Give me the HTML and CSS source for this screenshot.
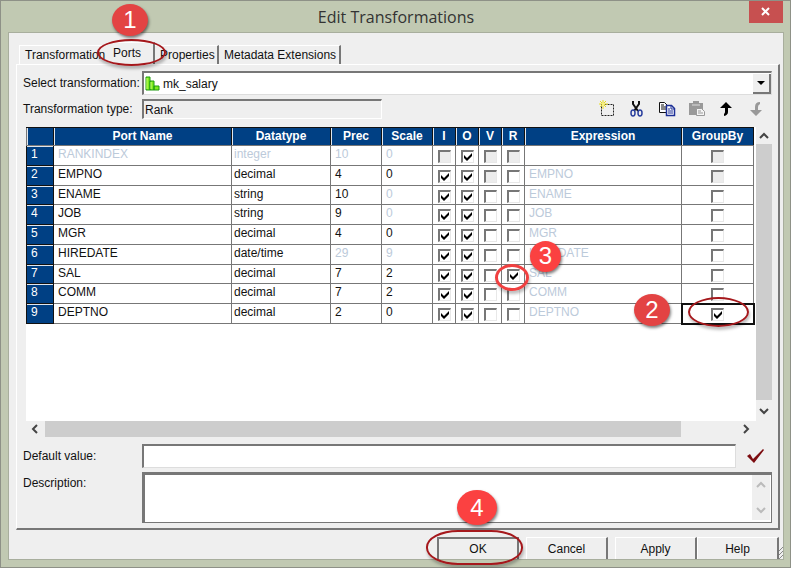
FILE: index.html
```html
<!DOCTYPE html>
<html lang="en">
<head>
    <meta charset="UTF-8">
    <meta name="viewport" content="width=device-width, initial-scale=1.0">
    <title>Edit Transformations</title>
    <link rel="stylesheet" href="styles.css">
</head>
<body>
<div class="window">
    <header class="titlebar">
        <h1>Edit Transformations</h1>
        <button class="close-btn" aria-label="Close">
            <svg width="10" height="10" viewBox="0 0 10 10"><path d="M1 1l7 7M8 1l-7 7" stroke="#fff" stroke-width="2"/></svg>
        </button>
    </header>

    <main class="client">
        <!-- Tabs -->
        <div class="tabs" role="tablist">
            <button class="tab tab-first" role="tab">Transformation</button>
            <button class="tab tab-active" role="tab" aria-selected="true">Ports
                <span class="ring ring-tab"></span>
                <span class="badge badge-1">1</span>
            </button>
            <button class="tab tab-props" role="tab">Properties</button>
            <button class="tab tab-meta" role="tab">Metadata Extensions</button>
        </div>

        <section class="panel">
            <div class="row">
                <label class="label" for="transformation">Select transformation:</label>
                <div class="combo">
                    <svg width="15" height="15" viewBox="0 0 15 15"><path d="M1 1h4v13h-4zM5 5h4v9h-4zM9 10h5v4h-5z" fill="#7dea1e" stroke="#1f9a10"/><path d="M2 2v11M6 6v7" stroke="#c8ff70"/></svg>
                    <select id="transformation"><option>mk_salary</option></select>
                    <span class="combo-arrow"><svg width="8" height="4" viewBox="0 0 8 4"><path d="M0 0h8l-4 4z"/></svg></span>
                </div>
            </div>

            <div class="row type-row">
                <label class="label" for="type">Transformation type:</label>
                <input class="type-input" id="type" type="text" value="Rank" readonly>
                <div class="toolbar">
                    <button class="tool" aria-label="New port">
                        <svg width="18" height="18" viewBox="0 0 18 18" fill="none"><path d="M3.500 4.500h12v11h-12z" stroke="#222" stroke-dasharray="2 1"/><path d="M5 0v9M1 4h9M2 1l6 6M8 1L2 7" stroke="#e8dc1c"/><path d="M5 3v3M4 4h3" stroke="#fff89a"/></svg>
                    </button>
                    <button class="tool" aria-label="Cut">
                        <svg width="18" height="18" viewBox="0 0 18 18" fill="none"><path d="M5 1v3l5 7M11 1v3l-5 7" stroke="#111" stroke-width="2"/><ellipse cx="5" cy="13" rx="2" ry="3" stroke="#2a3f9e" stroke-width="1.5"/><ellipse cx="12" cy="13" rx="2" ry="3" stroke="#2a3f9e" stroke-width="1.5"/></svg>
                    </button>
                    <button class="tool" aria-label="Copy">
                        <svg width="18" height="18" viewBox="0 0 18 18"><path d="M1.500 2.500h5l3 3v7h-8z" fill="#fff" stroke="#111"/><path d="M3 5h3M3 7h5M3 9h5" stroke="#111"/><path d="M8.500 5.500h5l3 3v7h-8z" fill="#fff" stroke="#1c2f96" stroke-width="1.500"/><path d="M13 5v4h4M10 9h2M10 11h5M10 13h5" stroke="#1c2f96" fill="none"/></svg>
                    </button>
                    <button class="tool" aria-label="Paste">
                        <svg width="18" height="18" viewBox="0 0 18 18"><path d="M1 3h4V1h6v2h4v12H1z" fill="#999"/><path d="M4 5h8" stroke="#ddd"/><path d="M8.500 8.500h5l3 3v4h-8z" fill="#f4f4f4" stroke="#999"/><path d="M10 11h3M10 13h5" stroke="#999"/></svg>
                    </button>
                    <button class="tool" aria-label="Move up">
                        <svg width="18" height="18" viewBox="0 0 18 18"><path d="M8 2l6 6h-4v4q0 3-4 4v-2q1-1 1-2V8H2z"/></svg>
                    </button>
                    <button class="tool" aria-label="Move down" disabled>
                        <svg width="18" height="18" viewBox="0 0 18 18"><path d="M8 16l6-6h-4V7q0-2 2-3V2q-5 0-5 5v3H2z" fill="#999"/></svg>
                    </button>
                </div>
            </div>

            <!-- Ports grid -->
            <div class="grid">
                <div class="pane">
                    <table class="ports">
                        <thead>
                        <tr>
                            <th class="col-num"></th>
                            <th class="col-name">Port Name</th>
                            <th class="col-type">Datatype</th>
                            <th class="col-size">Prec</th>
                            <th class="col-size">Scale</th>
                            <th class="col-flag">I</th>
                            <th class="col-flag">O</th>
                            <th class="col-flag">V</th>
                            <th class="col-flag">R</th>
                            <th>Expression</th>
                            <th class="col-group">GroupBy</th>
                        </tr>
                        </thead>
                        <tbody id="portRows"></tbody>
                    </table>
                </div>
                <div class="vscroll">
                    <svg width="10" height="8" viewBox="0 0 10 8"><path d="M1 6l4-4 4 4" fill="none" stroke="#444" stroke-width="2"/></svg>
                    <span class="thumb"></span>
                    <svg width="10" height="8" viewBox="0 0 10 8"><path d="M1 2l4 4 4-4" fill="none" stroke="#444" stroke-width="2"/></svg>
                </div>
                <div class="hscroll">
                    <svg width="8" height="10" viewBox="0 0 8 10"><path d="M6 1L2 5l4 4" fill="none" stroke="#444" stroke-width="2"/></svg>
                    <span class="track"><span class="thumb"></span></span>
                    <svg width="8" height="10" viewBox="0 0 8 10"><path d="M2 1l4 4-4 4" fill="none" stroke="#444" stroke-width="2"/></svg>
                </div>
            </div>

            <div class="row default-row">
                <label class="label" for="defaultValue">Default value:</label>
                <input class="default-input" id="defaultValue" type="text">
                <button class="validate" aria-label="Validate">
                    <svg width="18" height="14" viewBox="0 0 18 14"><path d="M0 7l3-2 3 5L16 0l1 1L7 14z" fill="#7c0c10"/></svg>
                </button>
            </div>

            <div class="row desc-row">
                <label class="label" for="description">Description:</label>
                <div class="desc">
                    <textarea id="description"></textarea>
                    <div class="desc-scroll">
                        <svg width="10" height="8" viewBox="0 0 10 8"><path d="M1 6l4-4 4 4" fill="none" stroke="#bbb" stroke-width="2"/></svg>
                        <svg width="10" height="8" viewBox="0 0 10 8"><path d="M1 2l4 4 4-4" fill="none" stroke="#bbb" stroke-width="2"/></svg>
                    </div>
                </div>
            </div>
        </section>

        <footer class="buttons">
            <button class="btn btn-ok">OK
                <span class="ring ring-ok"></span>
                <span class="badge badge-4">4</span>
            </button>
            <button class="btn">Cancel</button>
            <button class="btn">Apply</button>
            <button class="btn btn-help">Help</button>
            <svg class="grip" width="4" height="13" viewBox="0 0 4 13"><path d="M0 5l4-4M0 9l4-4M0 13l4-4" stroke="#888"/></svg>
        </footer>
    </main>
</div>

<script>
    // flags: I, O, V, R, GroupBy -> 1 checked, 0 empty, x disabled
    const ports = [
        { name: 'RANKINDEX', type: 'integer', prec: 10, scale: 0, flags: 'x1xxx', expr: '', dim: ['name', 'type', 'prec', 'scale'] },
        { name: 'EMPNO', type: 'decimal', prec: 4, scale: 0, flags: '11x0x', expr: 'EMPNO', dim: [] },
        { name: 'ENAME', type: 'string', prec: 10, scale: 0, flags: '11000', expr: 'ENAME', dim: ['scale'] },
        { name: 'JOB', type: 'string', prec: 9, scale: 0, flags: '11000', expr: 'JOB', dim: ['scale'] },
        { name: 'MGR', type: 'decimal', prec: 4, scale: 0, flags: '11000', expr: 'MGR', dim: [] },
        { name: 'HIREDATE', type: 'date/time', prec: 29, scale: 9, flags: '11000', expr: 'HIREDATE', dim: ['prec', 'scale'] },
        { name: 'SAL', type: 'decimal', prec: 7, scale: 2, flags: '11010', expr: 'SAL', dim: [] },
        { name: 'COMM', type: 'decimal', prec: 7, scale: 2, flags: '11000', expr: 'COMM', dim: [] },
        { name: 'DEPTNO', type: 'decimal', prec: 2, scale: 0, flags: '11001', expr: 'DEPTNO', dim: [] }
    ];
    const flagNames = ['Input', 'Output', 'Variable', 'Rank', 'Group by'];

    function flagCell(port, i) {
        const flag = port.flags[i];
        const state = flag === '1' ? 'checked' : flag === 'x' ? 'disabled' : '';
        let marks = '';
        let cls = 'flag';
        if (port.name === 'SAL' && i === 3) {
            marks = '<span class="ring ring-rank"></span><span class="badge badge-3">3</span>';
        }
        if (port.name === 'DEPTNO' && i === 4) {
            cls += ' focused';
            marks = '<span class="ring ring-group"></span><span class="badge badge-2">2</span>';
        }
        return `<td class="${cls}"><input type="checkbox" aria-label="${flagNames[i]} ${port.name}" ${state}>${marks}</td>`;
    }

    document.getElementById('portRows').innerHTML = ports.map((port, n) => {
        const cell = key => `<td class="${key}${port.dim.includes(key) ? ' dim' : ''}">${port[key]}</td>`;
        return `<tr><th scope="row">${n + 1}</th>`
            + ['name', 'type', 'prec', 'scale'].map(cell).join('')
            + [0, 1, 2, 3].map(i => flagCell(port, i)).join('')
            + `<td class="expr dim">${port.expr}</td>`
            + flagCell(port, 4) + '</tr>';
    }).join('');
</script>
</body>
</html>
```
FILE: styles.css
```css
* {
    box-sizing: border-box;
}
body {
    margin: 0;
    font-family: "Liberation Sans", Arial, sans-serif;
    font-size: 12px;
    color: #111;
}
button, input, select, textarea {
    font: inherit;
    color: inherit;
    margin: 0;
    padding: 0;
    border: none;
    border-radius: 0;
    background: none;
    outline: none;
}
svg {
    display: block;
    flex: none;
}

/* Window frame */
.window {
    display: flex;
    flex-direction: column;
    min-height: 100vh;
    padding: 0 7px 8px 8px;
    background-color: #c1c9b2;
    border: 1px solid #8e9187;
}
.titlebar {
    display: grid;
    grid-template-columns: 1fr auto 1fr;
    height: 32px;
}
.titlebar h1 {
    grid-column: 2;
    margin: 0;
    font-family: "Open Sans", sans-serif;
    font-size: 16px;
    font-weight: normal;
    line-height: 32px;
    color: #333;
}
.close-btn {
    display: flex;
    align-items: center;
    justify-content: center;
    justify-self: end;
    width: 34px;
    height: 22px;
    background-color: #c75050;
}
.client {
    display: flex;
    flex-direction: column;
    flex: 1;
    padding: 12px 3px 0 7px;
    background-color: #efefef;
    box-shadow: 0 0 0 1px #a8ae9d;
}

/* Tabs */
.tabs {
    display: flex;
    align-items: flex-end;
    height: 19px;
    padding-left: 3px;
}
.tab {
    height: 19px;
    padding: 0 5px;
    text-align: left;
    white-space: nowrap;
    border-top: 1px solid #fff;
    border-right: 2px solid #777;
}
.tab-first {
    width: 88px;
    border-left: 1px solid #fff;
    border-right: none;
}
.tab-active {
    position: relative;
    width: 48px;
    height: 22px;
    padding: 0 6px 2px;
    background-color: #efefef;
    z-index: 1;
}
.tab-props {
    width: 64px;
}
.tab-meta {
    width: 122px;
}

/* Panel */
.panel {
    display: flex;
    flex-direction: column;
    flex: 1;
    padding: 6px 6px 5px 6px;
    border-top: 1px solid #fff;
    border-left: 1px solid #fff;
    border-right: 2px solid #777;
    border-bottom: 2px solid #777;
}
.row {
    display: flex;
    align-items: center;
}
.label {
    flex: none;
    width: 119px;
    white-space: nowrap;
}
.combo {
    display: flex;
    align-items: center;
    flex: 1;
    height: 24px;
    padding-left: 1px;
    background-color: #fff;
    border: 1px solid #ddd;
    border-top: 2px solid #777;
    border-left: 2px solid #777;
}
.combo select {
    flex: 1;
    height: 20px;
    padding-left: 3px;
    appearance: none;
}
.combo-arrow {
    display: flex;
    align-items: center;
    justify-content: center;
    width: 18px;
    height: 20px;
    background-color: #efefef;
    border-right: 2px solid #777;
    border-bottom: 2px solid #777;
}
.type-row {
    height: 24px;
    margin-top: 2px;
}
.type-input {
    width: 240px;
    height: 20px;
    padding-left: 1px;
    border: 1px solid #fff;
    border-top: 2px solid #777;
    border-left: 2px solid #777;
}
.toolbar {
    display: flex;
    margin-left: auto;
}
.tool {
    display: flex;
    align-items: center;
    justify-content: center;
    width: 30px;
    height: 22px;
}

/* Ports grid */
.grid {
    display: grid;
    grid-template-columns: 1fr 16px;
    grid-template-rows: 1fr 16px;
    flex: 1;
    margin: 6px 0 7px 3px;
}
.pane {
    padding-right: 2px;
    background-color: #fff;
}
.ports {
    width: 100%;
    height: 197px;
    table-layout: fixed;
    border-collapse: collapse;
}
.ports th, .ports td {
    padding: 0;
    line-height: 17px;
    vertical-align: top;
    border: 1px solid #777;
}
.ports th {
    color: #fff;
    background-color: #004084;
}
.ports thead th {
    border-top: 1px solid #111;
    border-right: 1px solid #111;
    box-shadow: inset 1px 0 #dfe6ee;
}
.ports tbody th {
    padding-left: 4px;
    font-weight: normal;
    text-align: left;
    border-color: #111;
    box-shadow: inset 0 1px #dfe6ee;
}
.col-num {
    width: 27px;
}
.col-name {
    width: 178px;
}
.col-type {
    width: 99px;
}
.col-size {
    width: 51px;
}
.col-flag {
    width: 23px;
}
.col-group {
    width: 72px;
}
.ports .name, .ports .prec, .ports .scale, .ports .expr {
    padding-left: 4px;
}
.ports .type {
    padding-left: 2px;
}
.ports .dim {
    color: #bccada;
}
.ports .flag {
    position: relative;
    padding-top: 4px;
    line-height: 12px;
    text-align: center;
}
.ports .focused {
    outline: 2px solid #111;
    outline-offset: -1px;
}
.flag input {
    display: block;
    width: 13px;
    height: 13px;
    margin: 0 auto;
    appearance: none;
    background-color: #fff;
    border: 1px solid #e8e8e8;
    border-top: 2px solid #777;
    border-left: 2px solid #777;
}
.flag input:disabled {
    background-color: #ececec;
}
.flag input:checked {
    background-image: url("data:image/svg+xml,%3Csvg xmlns='http://www.w3.org/2000/svg' viewBox='0 0 10 10'%3E%3Cpath d='M1 3v3l3 3 5-5V1L4 6z'/%3E%3C/svg%3E");
    background-size: 10px 10px;
}

/* Scroll bars */
.thumb {
    background-color: #cdcdcd;
}
.vscroll {
    display: flex;
    flex-direction: column;
    align-items: center;
    gap: 4px;
    padding: 5px 0 6px;
}
.vscroll .thumb {
    flex: 1;
    width: 16px;
    margin-bottom: 3px;
}
.hscroll {
    display: flex;
    align-items: center;
    padding: 0 6px 0 5px;
}
.hscroll .track {
    display: flex;
    flex: 1;
    height: 16px;
    margin: 0 6px;
}
.hscroll .thumb {
    width: 92%;
}

/* Default value and description */
.default-row {
    height: 24px;
}
.default-input {
    flex: 1;
    height: 24px;
    padding: 0 4px;
    background-color: #fff;
    border: 1px solid #ddd;
    border-top: 2px solid #777;
    border-left: 2px solid #777;
}
.validate {
    display: flex;
    justify-content: center;
    width: 36px;
    padding-left: 4px;
}
.desc-row {
    align-items: flex-start;
    margin-top: 4px;
}
.desc-row .label {
    padding-top: 4px;
}
.desc {
    display: flex;
    flex: 1;
    height: 51px;
    background-color: #fff;
    border: 1px solid #777;
    border-top-width: 3px;
    border-left-width: 3px;
}
.desc textarea {
    flex: 1;
    resize: none;
}
.desc-scroll {
    display: flex;
    flex-direction: column;
    justify-content: space-between;
    align-items: center;
    width: 18px;
    padding: 6px 0;
    margin: 0 1px 2px 0;
    background-color: #efefef;
}

/* Dialog buttons */
.buttons {
    display: flex;
    justify-content: flex-end;
    padding-top: 7px;
    margin-right: -3px;
}
.btn {
    width: 82px;
    height: 22px;
    margin-left: 7px;
    border-top: 1px solid #fff;
    border-left: 1px solid #fff;
    border-right: 2px solid #777;
}
.btn-ok {
    position: relative;
    border-top: 2px solid #777;
    border-left: 2px solid #777;
}
.btn-help {
    margin-left: 0;
}
.grip {
    align-self: flex-end;
}

/* Numbered step markers */
.badge {
    position: absolute;
    display: flex;
    align-items: center;
    justify-content: center;
    width: 36px;
    height: 32px;
    font-family: "Liberation Sans", Arial, sans-serif;
    font-size: 24px;
    line-height: 24px;
    color: #fff;
    background-color: #e34343;
    border-radius: 50%;
    box-shadow: 1px 2px 3px rgba(0, 0, 0, 0.5);
    z-index: 3;
}
.ring {
    position: absolute;
    border: 2px solid #a5181c;
    border-radius: 50%;
    box-shadow: 1px 3px 3px rgba(0, 0, 0, 0.25);
    z-index: 2;
}
.ring-tab {
    top: -4px;
    left: -10px;
    width: 69px;
    height: 27px;
}
.badge-1 {
    top: -39px;
    left: 5px;
}
.ring-group {
    top: -7px;
    left: 6px;
    width: 61px;
    height: 30px;
}
.badge-2 {
    top: -10px;
    left: -48px;
}
.ring-rank {
    top: -1px;
    left: -7px;
    width: 34px;
    height: 27px;
    border: 3px solid #f04040;
}
.badge-3 {
    top: -24px;
    left: 28px;
    width: 31px;
    height: 31px;
    background-color: #fb4141;
}
.ring-ok {
    top: -9px;
    left: -13px;
    width: 97px;
    height: 35px;
    border-radius: 32px / 17px;
}
.badge-4 {
    top: -49px;
    left: 18px;
    width: 40px;
    height: 35px;
    background-color: #fb4141;
}
```
